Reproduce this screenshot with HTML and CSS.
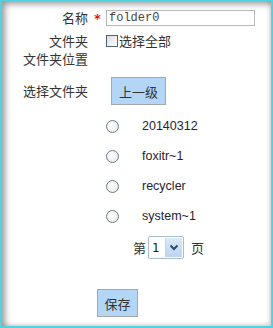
FILE: index.html
```html
<!DOCTYPE html>
<html lang="zh">
<head>
<meta charset="utf-8">
<link rel="stylesheet" href="styles.css">
</head>
<body>
<div class="frame">
  <form class="form">
    <div class="row r-name">
      <span class="label">名称</span>
      <span class="req">*</span>
      <input class="text" type="text" value="folder0">
    </div>
    <div class="row r-all">
      <span class="label">文件夹</span>
      <span></span>
      <label class="check"><input type="checkbox" class="cb">选择全部</label>
    </div>
    <div class="row r-loc">
      <span class="label">文件夹位置</span>
    </div>
    <div class="row r-pick">
      <span class="label">选择文件夹</span>
      <span></span>
      <div><button type="button" class="btn btn-up">上一级</button></div>
    </div>
    <div class="list">
      <label class="item"><input type="radio" name="f" class="rd"><span>20140312</span></label>
      <label class="item"><input type="radio" name="f" class="rd"><span>foxitr~1</span></label>
      <label class="item"><input type="radio" name="f" class="rd"><span>recycler</span></label>
      <label class="item"><input type="radio" name="f" class="rd"><span>system~1</span></label>
    </div>
    <div class="pager">
      <span>第</span>
      <span class="sel">
        <select class="page"><option>1</option></select>
        <span class="arrow"><svg width="10" height="7" viewBox="0 0 10 7"><path d="M1.5 1.5 L5 5 L8.5 1.5" fill="none" stroke="#2a4a78" stroke-width="2"/></svg></span>
      </span>
      <span>页</span>
    </div>
    <div class="save-row">
      <button type="button" class="btn btn-save">保存</button>
    </div>
  </form>
</div>
</body>
</html>
```
FILE: styles.css
```css
html, body {
  margin: 0;
  padding: 0;
  background: #fff;
}
.frame {
  width: 273px;
  height: 328px;
  box-sizing: border-box;
  border-style: solid;
  border-color: #52d2de;
  border-width: 1px 2px 2px 2px;
  box-shadow: inset 3px 3px 6px rgba(0,0,0,0.4), inset -2px -2px 4px rgba(0,0,0,0.12);
  font-family: "Noto Sans CJK SC", "Microsoft YaHei", sans-serif;
  font-size: 13px;
  color: #333;
  overflow: hidden;
}
.form {
  display: flex;
  flex-direction: column;
  padding-top: 6px;
  margin-left: -2px;
}
.row {
  display: grid;
  grid-template-columns: 88px 18px 1fr;
  align-items: center;
  height: 18px;
}
.label {
  text-align: right;
  line-height: 18px;
}
.req {
  color: #e8100c;
  text-align: center;
  font-family: "DejaVu Sans", sans-serif;
  font-size: 13px;
  font-weight: bold;
  padding-left: 1px;
  line-height: 18px;
  padding-top: 3px;
}
.text {
  box-sizing: border-box;
  width: 149px;
  height: 16px;
  margin: 0;
  padding: 0 2px;
  border: 1px solid #b8b8b8;
  font-family: "Liberation Mono", monospace;
  font-size: 12px;
  color: #444;
  outline: none;
}
.r-all { margin-top: 7px; }
.check {
  display: flex;
  align-items: center;
  line-height: 18px;
}
.cb {
  appearance: none;
  -webkit-appearance: none;
  box-sizing: border-box;
  width: 12px;
  height: 12px;
  margin: 0 1px 0 0;
  border: 1px solid #4f6378;
  background: linear-gradient(135deg, #dcdcdc, #fff);
}
.r-pick {
  margin-top: 9px;
  height: 28px;
}
.btn {
  box-sizing: border-box;
  height: 28px;
  margin: 0;
  padding: 0;
  background: #b3d6f6;
  border: 1px solid #a8a8a8;
  font-family: "Noto Sans CJK SC", sans-serif;
  font-size: 13px;
  color: #333;
}
.btn-up {
  width: 55px;
  margin-left: 5px;
}
.list {
  display: flex;
  flex-direction: column;
  margin-top: 6px;
  padding-left: 106px;
}
.item {
  display: flex;
  align-items: center;
  height: 30px;
  font-family: "Liberation Sans", Arial, sans-serif;
  font-size: 12.5px;
  color: #2a2230;
}
.rd {
  appearance: none;
  -webkit-appearance: none;
  box-sizing: border-box;
  width: 13px;
  height: 13px;
  margin: 0 23px 0 0;
  border: 1.5px solid #6a7a8c;
  border-radius: 50%;
  background: radial-gradient(circle at 40% 40%, #fff, #e6e6e6);
}
.pager {
  display: flex;
  align-items: center;
  margin-top: 5px;
  padding-left: 133px;
  height: 23px;
  gap: 1px;
}
.sel {
  position: relative;
  display: inline-block;
  width: 36px;
  height: 23px;
  margin: 0 6px 0 1px;
}
.page {
  appearance: none;
  -webkit-appearance: none;
  box-sizing: border-box;
  width: 36px;
  height: 23px;
  margin: 0;
  padding: 0 0 0 3px;
  border: 1px solid #a9bdd6;
  background: #fff;
  font-family: "DejaVu Sans", sans-serif;
  font-size: 12px;
  color: #222;
  border-radius: 2px;
}
.arrow {
  position: absolute;
  right: 2px;
  top: 2px;
  width: 16px;
  height: 19px;
  display: flex;
  align-items: center;
  justify-content: center;
  background: linear-gradient(#dbe9f8, #bcd4ef);
  border-left: 1px solid #c5d6ea;
  pointer-events: none;
}
.save-row {
  margin-top: 30px;
  padding-left: 97px;
}
.btn-save {
  width: 41px;
}
```
